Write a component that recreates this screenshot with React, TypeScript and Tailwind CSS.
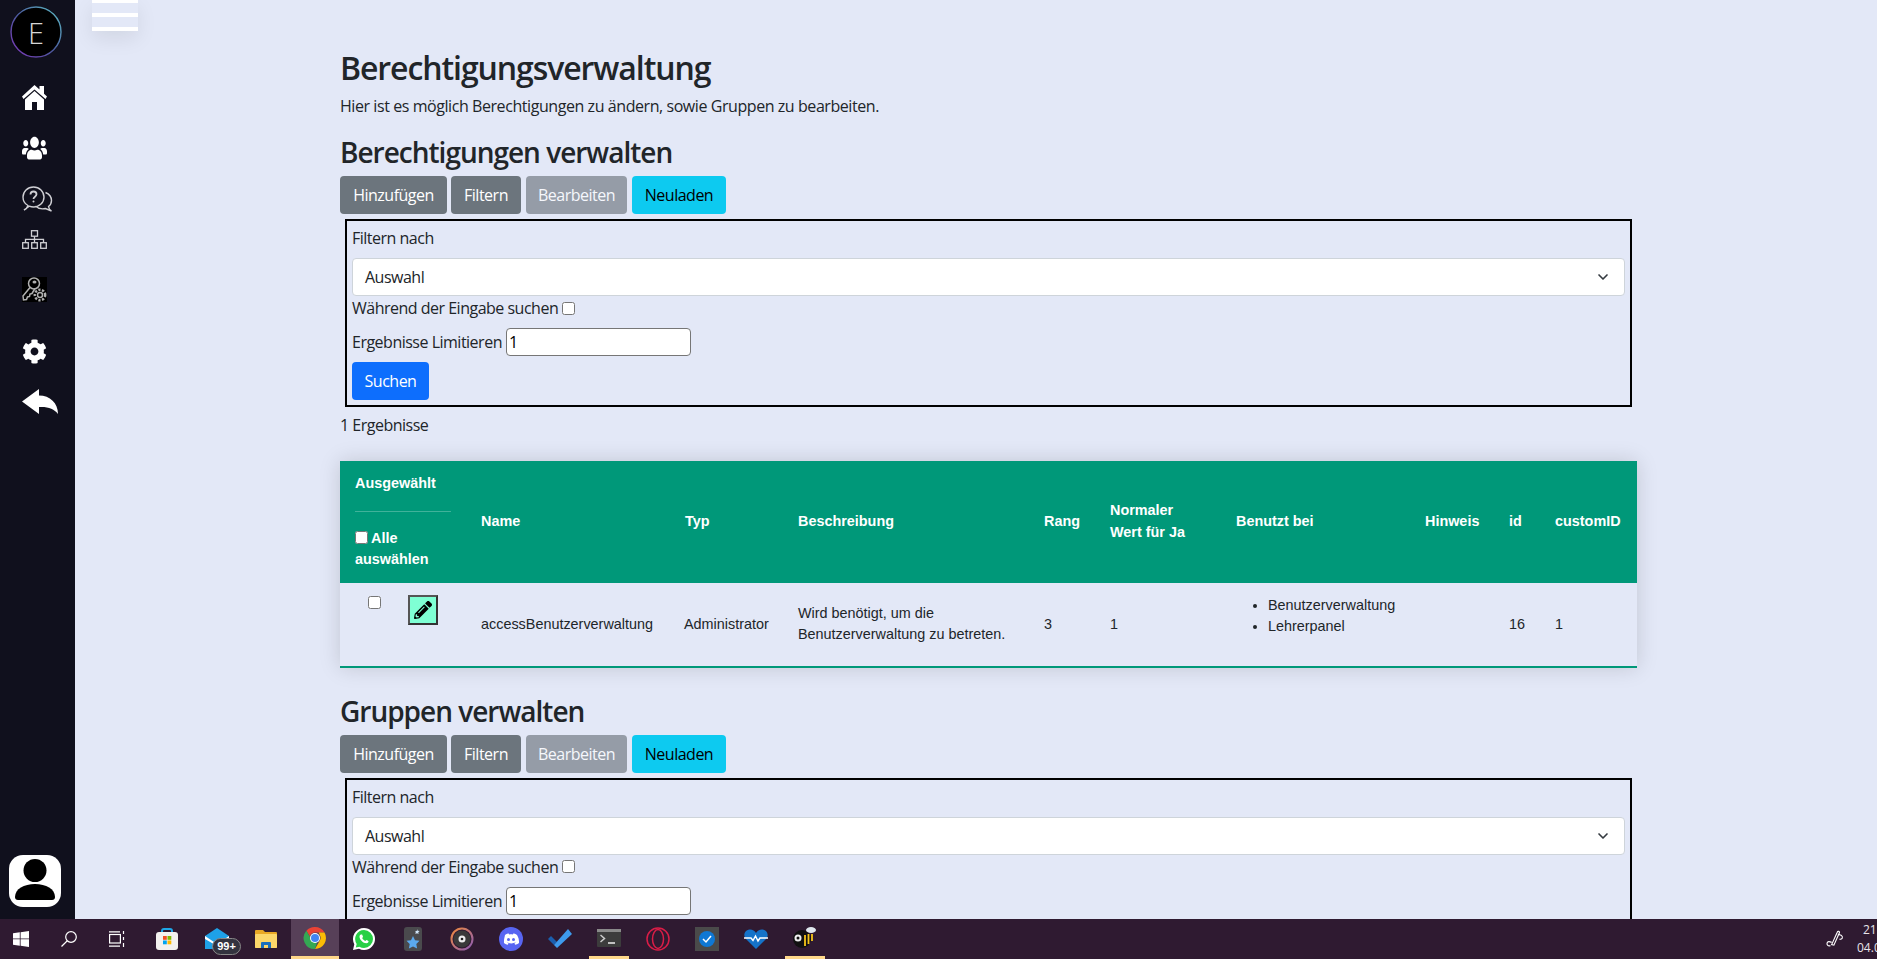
import { FaUsers, FaCog, FaPencilAlt } from "react-icons/fa";
import { ChevronDown } from "lucide-react";

const SANS = "font-['Open_Sans','Noto_Sans',sans-serif]";

function HomeIcon() {
  return (
    <svg className="mt-[27px]" width="25" height="25" viewBox="0 0 25 25" fill="#fff">
      <path d="M12.500 0L17.500 4.500V1H22V8.700L25 11.500 23.500 14 12.500 4.500 1.500 14 0 11.500Z" />
      <path d="M3 14.500L12.500 6 22 14.500V25H15V17H10V25H3Z" />
    </svg>
  );
}

function ReplyIcon() {
  return (
    <svg className="mt-[25px]" width="36" height="25" viewBox="0 0 36 25" fill="#fff">
      <path d="M0 12.500L17 0V6.500C28 6.500 36 14 36 25 32 19.500 26 17.500 17 18V25Z" />
    </svg>
  );
}

function BubblesIcon() {
  return (
    <svg width="31" height="26" viewBox="0 0 31 26" fill="none" stroke="#cfcfd4" strokeWidth="1.4">
      <path d="M6 19.500C2.800 17.800 1 14.600 1 11 1 5.500 5.500 1 11.500 1S22 5.500 22 11s-4.500 10-10.500 10c-1.500 0-3-.3-4.200-.8L2 24c2-1 3.500-2.500 4-4.500z" />
      <path d="M23.500 6.500C27 8 29.500 10.800 29.500 14.500c0 2.500-1 4.500-3 6 .2 1.800 1.200 3.200 3 4.500l-6-2.500c-3.500.8-7.500 0-10-2.500" />
      <path d="M8.500 8.500c0-1.800 1.300-3 3-3s3 1.200 3 2.800c0 2.400-3 2.400-3 4.700" strokeWidth="1.800" />
      <circle cx="11.500" cy="15.500" r="1" fill="#cfcfd4" stroke="none" />
    </svg>
  );
}

function SitemapIcon() {
  return (
    <svg width="25" height="19" viewBox="0 0 25 19" fill="none" stroke="#cfcfd4" strokeWidth="1.300">
      <rect x="9.500" y="0.700" width="6" height="5.500" />
      <path d="M12.500 6.200v6.300M3.500 12.500V9.300h18v3.200" />
      <rect x="0.700" y="12.700" width="5.600" height="5.600" />
      <rect x="9.700" y="12.700" width="5.600" height="5.600" />
      <rect x="18.700" y="12.700" width="5.600" height="5.600" />
    </svg>
  );
}

function KeyGearIcon() {
  return (
    <svg className="bg-black" width="25" height="25" viewBox="0 0 25 25" fill="none" stroke="#b0b0b0" strokeWidth="1.500">
      <circle cx="12" cy="6.500" r="5.500" />
      <ellipse cx="12.500" cy="5" rx="2" ry="1.500" fill="#b0b0b0" stroke="none" />
      <path d="M8 10.500L1 19l.5 4 3-.5 1-2.500 2-.5.5-2.500 2-.5 3-5" />
      <circle cx="18" cy="18" r="5.200" strokeWidth="2.500" strokeDasharray="2.200 1.500" />
      <circle cx="18" cy="18" r="2.500" />
    </svg>
  );
}

function AvatarIcon() {
  return (
    <div className="w-[52px] h-[52px] rounded-[14px] bg-white overflow-hidden">
      <svg width="52" height="52" viewBox="0 0 52 52" fill="#000">
        <circle cx="26" cy="15.500" r="11.500" />
        <path d="M6 42c0-8 9-13 20-13s20 5 20 13c0 2-1 3-3 3H9c-2 0-3-1-3-3z" />
      </svg>
    </div>
  );
}

function Logo() {
  return (
    <div className="relative w-[52px] h-[52px] flex items-center justify-center rounded-full bg-black">
      <svg className="absolute inset-0" width="52" height="52" viewBox="0 0 52 52" fill="none">
        <defs>
          <linearGradient id="ring" x1="0" y1="1" x2="1" y2="0">
            <stop offset="0" stopColor="#7a35b5" />
            <stop offset="0.5" stopColor="#4b5a9c" />
            <stop offset="1" stopColor="#5fc0c8" />
          </linearGradient>
        </defs>
        <circle cx="26" cy="26" r="25" stroke="url(#ring)" strokeWidth="1.500" />
      </svg>
      <span className={`${SANS} text-[29px] font-light leading-none text-[#d6d6d6]`}>E</span>
    </div>
  );
}

function Sidebar() {
  return (
    <aside className="w-[75px] shrink-0 bg-[#10101d] flex flex-col pl-[22px]">
      <div className="-ml-3 mt-[6px]">
        <Logo />
      </div>
      <HomeIcon />
      <FaUsers className="mt-[25px] w-[25px] h-[26px] text-white" preserveAspectRatio="none" />
      <div className="mt-[25px] leading-none">
        <BubblesIcon />
      </div>
      <div className="mt-[18px] leading-none">
        <SitemapIcon />
      </div>
      <div className="mt-[28px] leading-none">
        <KeyGearIcon />
      </div>
      <FaCog className="mt-[37px] text-white" size={25} />
      <ReplyIcon />
      <div className="mt-auto mb-3 -ml-[13px]">
        <AvatarIcon />
      </div>
    </aside>
  );
}

function Toolbar() {
  return (
    <div className={`flex mt-[7px] text-base tracking-[-0.5px] ${SANS}`}>
      <button className="w-[107px] h-[38px] rounded bg-[#6c757d] text-white">Hinzufügen</button>
      <button className="w-[70px] h-[38px] ml-1 rounded bg-[#6c757d] text-white">Filtern</button>
      <button className="w-[101px] h-[38px] ml-[5px] rounded bg-[#6c757d] text-white opacity-65">Bearbeiten</button>
      <button className="w-[94px] h-[38px] ml-[5px] rounded bg-[#0dcaf0] text-black">Neuladen</button>
    </div>
  );
}

function FilterBox() {
  return (
    <div className={`mx-[5px] mt-[5px] border-2 border-black p-[5px] text-base leading-6 text-[#212529] tracking-[-0.5px] ${SANS}`}>
      <div className="mb-2">Filtern nach</div>
      <div className="h-[38px] flex items-center justify-between rounded border border-[#ced4da] bg-white pl-3 pr-[13px]">
        <span>Auswahl</span>
        <ChevronDown size={16} strokeWidth={2.500} className="text-[#343a40]" />
      </div>
      <div className="flex items-center h-6">
        Während der Eingabe suchen
        <input type="checkbox" className="ml-1 w-[13px] h-[13px]" />
      </div>
      <div className="flex items-center mt-2">
        Ergebnisse Limitieren
        <input
          readOnly
          value="1"
          className="ml-1 w-[185px] h-7 rounded-sm border border-[#767676] bg-white px-0.5 text-black"
        />
      </div>
      <button className="block mt-[6px] w-[77px] h-[38px] rounded bg-[#0d6efd] text-white">Suchen</button>
    </div>
  );
}

function PermissionTable() {
  const headers = ["Name", "Typ", "Beschreibung", "Rang", "Normaler Wert für Ja", "Benutzt bei", "Hinweis", "id", "customID"];
  return (
    <table className="w-full table-fixed border-collapse text-[14.4px] leading-[21.6px] mt-6 mb-[26px] font-['Liberation_Sans',Arial,sans-serif] shadow-[0_0_20px_rgba(0,0,0,0.15)]">
      <colgroup>
        <col className="w-[126px]" />
        <col className="w-[204px]" />
        <col className="w-[113px]" />
        <col className="w-[246px]" />
        <col className="w-[66px]" />
        <col className="w-[126px]" />
        <col className="w-[189px]" />
        <col className="w-[84px]" />
        <col className="w-[46px]" />
        <col className="w-[97px]" />
      </colgroup>
      <thead>
        <tr className="bg-[#009879] text-white text-left">
          <th className="px-[15px] py-3 font-bold">
            Ausgewählt
            <hr className="my-4 border-0 h-px bg-white/25" />
            <input type="checkbox" className="w-[13px] h-[13px] align-[-1px] mr-[3px]" />
            Alle auswählen
          </th>
          {headers.map((h) => (
            <th key={h} className="px-[15px] py-3 font-bold whitespace-normal">
              {h}
            </th>
          ))}
        </tr>
      </thead>
      <tbody className="text-[#212529]">
        <tr className="border-b-2 border-[#009879]">
          <td className="px-[15px] py-3 align-top">
            <div className="flex items-start pl-[13px]">
              <input type="checkbox" className="w-[13px] h-[13px] mt-px" />
              <button className="ml-[27px] w-[30px] h-[30px] flex items-center justify-center bg-[#7fffd4] border-2 border-t-[#555] border-l-[#555] border-b-[#333] border-r-[#333] text-black">
                <FaPencilAlt size={18} />
              </button>
            </div>
          </td>
          <td className="px-[15px] py-3">accessBenutzerverwaltung</td>
          <td className="px-[15px] py-3 -translate-x-px">Administrator</td>
          <td className="px-[15px] py-3">Wird benötigt, um die Benutzerverwaltung zu betreten.</td>
          <td className="px-[15px] py-3">3</td>
          <td className="px-[15px] py-3">1</td>
          <td className="px-[15px] py-3">
            <ul className="list-disc pl-8 mb-4">
              <li>Benutzerverwaltung</li>
              <li>Lehrerpanel</li>
            </ul>
          </td>
          <td className="px-[15px] py-3"></td>
          <td className="px-[15px] py-3">16</td>
          <td className="px-[15px] py-3">1</td>
        </tr>
      </tbody>
    </table>
  );
}

// taskbar icons
const TASK_ICONS = [
  {
    cls: "w-[42px]",
    icon: (
      <svg width="16" height="16" viewBox="0 0 16 16" fill="#fff">
        <path d="M0 2.300 6.800 1.300V7.500H0zM7.600 1.200 16 0V7.500H7.600zM0 8.300H6.800V14.700L0 13.700zM7.600 8.300H16V16L7.600 14.800z" />
      </svg>
    ),
  },
  {
    cls: "w-[54px]",
    icon: (
      <svg width="16" height="16" viewBox="0 0 16 16" fill="none" stroke="#fff" strokeWidth="1.200">
        <circle cx="10" cy="6" r="5.300" />
        <path d="M6.300 9.800L.5 15.500" />
      </svg>
    ),
  },
  {
    cls: "w-[42px]",
    icon: (
      <svg width="16" height="16" viewBox="0 0 16 16" fill="none" stroke="#fff" strokeWidth="1.200">
        <rect x="0.600" y="3.500" width="10.800" height="8.500" />
        <path d="M0 0.800h11M0 15.200h11M14.500 0v3M14.500 6v3M14.500 12v4" />
      </svg>
    ),
  },
  {
    cls: "w-[48px] ml-[5px]",
    icon: (
      <svg width="24" height="24" viewBox="0 0 24 24">
        <path d="M7 6V4a2 2 0 0 1 2-2h6a2 2 0 0 1 2 2v2" fill="none" stroke="#1ea7e8" strokeWidth="2" />
        <rect x="1" y="5" width="22" height="18" rx="3" fill="#f3f1ee" />
        <rect x="8" y="9" width="3.800" height="3.800" fill="#f25022" />
        <rect x="12.500" y="9" width="3.800" height="3.800" fill="#7fba00" />
        <rect x="8" y="13.500" width="3.800" height="3.800" fill="#00a4ef" />
        <rect x="12.500" y="13.500" width="3.800" height="3.800" fill="#ffb900" />
      </svg>
    ),
  },
  {
    cls: "w-[48px] ml-[2px]",
    icon: (
      <div className="relative w-6 h-6">
        <svg width="24" height="24" viewBox="0 0 24 24">
          <path d="M0 9 12 1l12 8v13H0z" fill="#1ea1e8" />
          <path d="M0 9l12 8 12-8v3L12 19 0 12z" fill="#fff" />
        </svg>
        <span className="absolute left-[7px] top-[11px] w-[29px] h-[17px] rounded-full bg-[#33333f] border border-[#888] flex items-center justify-center text-[11px] font-bold leading-none text-white font-['Liberation_Sans',sans-serif]">
          99+
        </span>
      </div>
    ),
  },
  {
    cls: "w-[48px] ml-px",
    icon: (
      <svg width="22" height="18" viewBox="0 0 22 18">
        <path d="M0 1a1 1 0 0 1 1-1h7l2 2h11a1 1 0 0 1 1 1v14a1 1 0 0 1-1 1H1a1 1 0 0 1-1-1z" fill="#e9a825" />
        <rect x="0" y="4" width="22" height="14" rx="1" fill="#fcd76a" />
        <path d="M6 18v-5a1 1 0 0 1 1-1h8a1 1 0 0 1 1 1v5h-3v-3H9v3z" fill="#1a6fbd" />
      </svg>
    ),
  },
  {
    cls: "w-[48px] ml-px self-stretch bg-[#574058] border-b-[3px] border-[#ffd88a]",
    icon: (
      <svg width="24" height="24" viewBox="0 0 24 24">
        <path d="M12 1a11 11 0 0 1 9.500 5.500H12a5.500 5.500 0 0 0-5.200 3.700L3.400 4.700A11 11 0 0 1 12 1z" fill="#ea4335" />
        <path d="M21.500 6.500A11 11 0 0 1 12 23l4.700-8.200a5.500 5.500 0 0 0 .1-5.800 5 5 0 0 0-1.300-2.500z" fill="#fbbc05" />
        <path d="M12 23A11 11 0 0 1 3.400 4.700l4.800 8.300a5 5 0 0 0 6 2.900L12 23z" fill="#34a853" />
        <circle cx="12" cy="12" r="5" fill="#fff" />
        <circle cx="12" cy="12" r="4" fill="#4285f4" />
      </svg>
    ),
  },
  {
    cls: "w-[48px] ml-px",
    icon: (
      <svg width="22" height="22" viewBox="0 0 22 22">
        <path d="M11 0a11 11 0 0 1 0 22 11 11 0 0 1-5-1.200L0 22l1.300-5.800A11 11 0 0 1 11 0z" fill="#fff" />
        <path d="M11 2a9 9 0 0 1 0 18 9 9 0 0 1-4.600-1.300L2.800 19.500l.9-3.500A9 9 0 0 1 11 2z" fill="#27d045" />
        <path d="M8 6.500c-.5 0-1.500.8-1.500 2.300 0 2.800 3.600 6.500 6.800 6.500 1.300 0 2.300-1 2.300-2 0-.3-2-1.300-2.300-1.200l-.9 1c-1.300-.4-2.700-1.800-3.200-3l.8-1c.1-.4-.8-2.600-1-2.600z" fill="#fff" />
      </svg>
    ),
  },
  {
    cls: "w-[48px] ml-px",
    icon: (
      <svg width="18" height="24" viewBox="0 0 18 24">
        <rect width="18" height="24" rx="3" fill="#4a4a4d" />
        <path d="M9 9l2 4.200 4.500.6-3.200 3.100.8 4.600L9 19.400l-4.100 2.100.8-4.600-3.200-3.100 4.500-.6z" fill="#5ba9ee" />
        <path d="M13 2l.8 1.700 1.800.3-1.300 1.300.3 1.800-1.600-.8-1.600.8.300-1.800L11.400 4l1.800-.3z" fill="#cfe4f7" />
      </svg>
    ),
  },
  {
    cls: "w-[48px] ml-px",
    icon: (
      <svg width="24" height="24" viewBox="0 0 24 24" fill="none">
        <defs>
          <linearGradient id="groove" x1="0" y1="0" x2="1" y2="1">
            <stop offset="0" stopColor="#f08a3c" />
            <stop offset="1" stopColor="#8a5bb5" />
          </linearGradient>
        </defs>
        <circle cx="12" cy="12" r="10.500" stroke="url(#groove)" strokeWidth="2" />
        <circle cx="12" cy="12" r="8.500" fill="#3a3a3a" />
        <circle cx="12" cy="12" r="3.500" fill="#eee" />
        <circle cx="12" cy="12" r="1.300" fill="#222" />
      </svg>
    ),
  },
  {
    cls: "w-[48px] ml-px",
    icon: (
      <svg width="24" height="24" viewBox="0 0 24 24">
        <circle cx="12" cy="12" r="12" fill="#5865f2" />
        <path d="M6 8c1.500-1 3-1.300 3.700-1.400l.4.800c1.200-.2 2.600-.2 3.800 0l.4-.8c.7.100 2.200.4 3.700 1.400 1.500 2.500 2.200 5 2 8-1.400 1-2.700 1.500-3.800 1.800l-.8-1.300 1.300-.7-.3-.2c-2.500 1.100-5.300 1.100-7.800 0l-.3.200 1.300.7-.8 1.300C7.700 17.500 6.400 17 5 16c-.2-3 .5-5.500 1-8z" fill="#fff" />
        <circle cx="9.500" cy="12.500" r="1.500" fill="#5865f2" />
        <circle cx="14.500" cy="12.500" r="1.500" fill="#5865f2" />
      </svg>
    ),
  },
  {
    cls: "w-[48px] ml-px",
    icon: (
      <svg width="24" height="20" viewBox="0 0 24 20">
        <path d="M0 10l3-3 6 6-3 3z" fill="#1b5fae" />
        <path d="M6 16l3 3L24 5l-4-5z" fill="#3e9bed" />
      </svg>
    ),
  },
  {
    cls: "w-[40px] ml-[5px] mr-[3px] self-stretch border-b-[3px] border-[#ffd88a]",
    icon: (
      <svg width="24" height="18" viewBox="0 0 24 18">
        <rect width="24" height="18" rx="1" fill="#3c3c3c" />
        <rect width="24" height="3" fill="#8a8a8a" />
        <path d="M3.500 6l4 3.500-4 3.500" fill="none" stroke="#ccc" strokeWidth="1.500" />
        <path d="M11 14h7" stroke="#eee" strokeWidth="1.500" />
      </svg>
    ),
  },
  {
    cls: "w-[48px] ml-[2px]",
    icon: (
      <svg width="24" height="24" viewBox="0 0 24 24" fill="none" stroke="#d91d47" strokeWidth="1.500">
        <circle cx="12" cy="12" r="11" />
        <ellipse cx="12" cy="12" rx="5.500" ry="9.500" />
      </svg>
    ),
  },
  {
    cls: "w-[48px] ml-px",
    icon: (
      <div className="w-6 h-6 bg-[#4a4a4a] flex items-center justify-center">
        <svg width="16" height="16" viewBox="0 0 16 16">
          <circle cx="8" cy="8" r="8" fill="#0f78d4" />
          <path d="M4 8l3 3 5-6" fill="none" stroke="#fff" strokeWidth="1.500" />
        </svg>
      </div>
    ),
  },
  {
    cls: "w-[48px] ml-px",
    icon: (
      <svg width="24" height="20" viewBox="0 0 24 20">
        <path d="M12 20L1.500 9.500C-1 6.500.5 1 5.500 0.500 8.500.3 10.500 1.500 12 4c1.500-2.500 3.500-3.700 6.500-3.500 5 .5 6.500 6 4 9z" fill="#1573c9" />
        <path d="M0 9h7l2 2.500L11.500 7l2.500 5 2-3h8" fill="none" stroke="#fff" strokeWidth="1.500" />
      </svg>
    ),
  },
  {
    cls: "w-[40px] ml-[5px] self-stretch border-b-[3px] border-[#ffd88a]",
    icon: (
      <svg width="24" height="24" viewBox="0 0 24 24">
        <ellipse cx="9" cy="13" rx="9" ry="9" fill="#111" />
        <ellipse cx="18" cy="4" rx="5" ry="3" fill="#dfe8ee" />
        <circle cx="5" cy="12" r="3.500" fill="#eee" />
        <circle cx="5" cy="12" r="1.500" fill="#111" />
        <path d="M12 9v11M15.500 8v10M19 8v7" stroke="#f5c518" strokeWidth="1.800" />
      </svg>
    ),
  },
];

function Taskbar() {
  return (
    <footer className="h-10 shrink-0 bg-[#2f1a31] flex items-center">
      {TASK_ICONS.map((t, i) => (
        <div key={i} className={`h-full shrink-0 flex items-center justify-center ${t.cls}`}>
          {t.icon}
        </div>
      ))}
      <svg className="ml-auto" width="18" height="18" viewBox="0 0 16 16" fill="none" stroke="#fff" strokeWidth="1">
        <path d="M4 14c-2.500.5-3.500-1-3-2.500S3 10 5 11M5 13l5-11c.5-1.300 2-1 2 .3l-5 11.200zM10.500 4c2 0 4.500 1 4 3-.3 1-1.500 1.500-2.500 1" />
      </svg>
      <div className={`ml-[13px] w-5 flex flex-col text-xs leading-[18px] text-[#e8e4ea] overflow-hidden ${SANS}`}>
        <span className="pl-[6px]">21:</span>
        <span>04.0</span>
      </div>
    </footer>
  );
}

function Section({ title }: { title: string }) {
  return (
    <>
      <h2 className={`text-[28px] leading-[34px] font-semibold text-[#212529] tracking-[-1px] ${SANS}`}>{title}</h2>
      <Toolbar />
      <FilterBox />
    </>
  );
}

export default function App() {
  return (
    <div className="h-[959px] flex flex-col overflow-hidden bg-[#e3e8f7]">
      <div className="flex flex-1 min-h-0">
        <Sidebar />
        <main className="relative flex-1 min-w-0 overflow-hidden pl-[265px]">
          {/* hamburger toggle */}
          <div className="absolute left-[17px] -top-px w-[46px] flex flex-col gap-[10px] shadow-[0_8px_20px_rgba(0,0,0,0.08)]">
            <span className="h-1 bg-white" />
            <span className="h-1 bg-white" />
            <span className="h-1 bg-white" />
          </div>
          <div className="w-[1297px] pt-[49px]">
            <h1 className={`text-[32px] leading-[38px] font-semibold text-[#212529] tracking-[-1.08px] ${SANS}`}>
              Berechtigungsverwaltung
            </h1>
            <p className={`mt-[7px] mb-[17px] text-base leading-6 text-[#212529] tracking-[-0.43px] ${SANS}`}>
              Hier ist es möglich Berechtigungen zu ändern, sowie Gruppen zu bearbeiten.
            </p>
            <Section title="Berechtigungen verwalten" />
            <p className={`mt-[6px] text-base leading-6 text-[#212529] tracking-[-0.5px] ${SANS}`}>1 Ergebnisse</p>
            <PermissionTable />
            <Section title="Gruppen verwalten" />
          </div>
        </main>
      </div>
      <Taskbar />
    </div>
  );
}
